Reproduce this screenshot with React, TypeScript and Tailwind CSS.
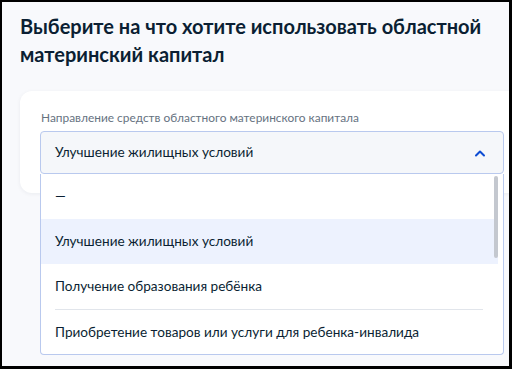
import React from 'react';

const options = [
  { label: '—' },
  { label: 'Улучшение жилищных условий', active: true },
  { label: 'Получение образования ребёнка', divider: true },
  { label: 'Приобретение товаров или услуги для ребенка-инвалида' },
];

function ChevronUp() {
  return (
    <svg width="12" height="8" viewBox="0 0 12 8" fill="none">
      <path
        d="M2 6.5L6 2.5L10 6.5"
        stroke="#0d4cd3"
        strokeWidth="2"
        strokeLinecap="round"
        strokeLinejoin="round"
      />
    </svg>
  );
}

export default function App() {
  return (
    <div className="w-[512px] h-[369px] bg-black pt-[2px] pl-[2px] pr-[3px] pb-[3px] font-['Lato','Liberation_Sans',sans-serif]">
      <div className="relative h-full overflow-hidden bg-[#f8f9fc] pl-[18px]">
        {/* TITLE */}
        <h1 className="pt-[10px] text-[20px] leading-[28px] font-bold text-[#0b1f33]">
          Выберите на что хотите использовать областной материнский капитал
        </h1>

        {/* CARD */}
        <div className="mt-[23px] w-[520px] rounded-[12px] bg-white px-[20px] pt-[19px] pb-[19px] shadow-[0_1px_4px_rgba(11,31,51,0.06)]">
          <p className="mb-[5px] pl-[1px] text-[11.9px] leading-[16px] text-[#66727f]">
            Направление средств областного материнского капитала
          </p>
          <div className="relative">
            <div className="flex h-[43px] w-[464px] items-center justify-between rounded-[4px] border border-[#b9c9ee] bg-[#f5f7fa] pl-[14px] pr-[17px]">
              <span className="text-[13.6px] text-[#0b1f33]">
                Улучшение жилищных условий
              </span>
              <ChevronUp />
            </div>

            {/* DROPDOWN */}
            <div className="absolute left-0 top-[43px] z-10 h-[181px] w-[464px] overflow-hidden rounded-b-[4px] border border-t-0 border-[#b9c9ee] bg-white">
              {options.map((o) => (
                <div key={o.label}>
                  <div
                    className={
                      o.active
                        ? 'flex h-[45px] items-center bg-[#edf2fe] pl-[14px] mr-[5px] text-[13.6px] text-[#0b1f33]'
                        : 'flex h-[45px] items-center pl-[14px] text-[13.6px] text-[#0b1f33]'
                    }
                  >
                    {o.label}
                  </div>
                  {o.divider && (
                    <div className="ml-[14px] mr-[20px] h-px bg-[#e1e5eb]" />
                  )}
                </div>
              ))}
              <div className="absolute right-[5px] top-[2px] h-[82px] w-[4px] rounded-full bg-[#c4c8cf]" />
            </div>
          </div>
        </div>
      </div>
    </div>
  );
}
